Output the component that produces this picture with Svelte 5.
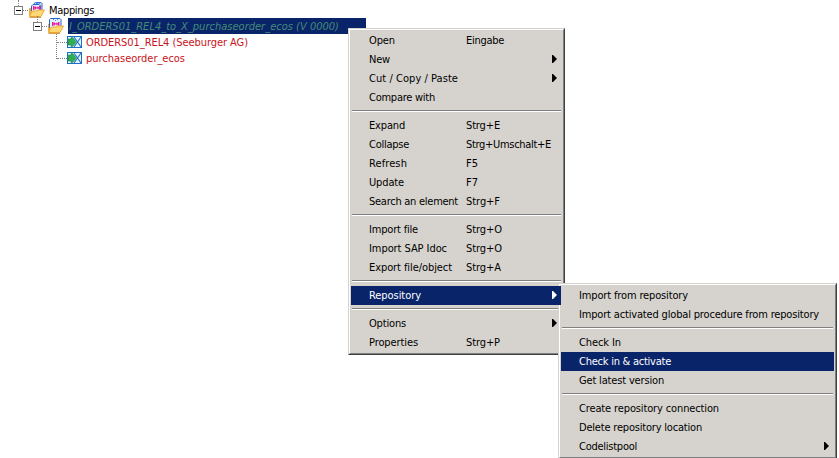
<script>
  const mainMenu = [
    { label: 'Open', w: 26, key: 'Eingabe', kw: 38 },
    { label: 'New', w: 21, sub: true },
    { label: 'Cut / Copy / Paste', w: 89, sub: true },
    { label: 'Compare with', w: 66 },
    null,
    { label: 'Expand', w: 36, key: 'Strg+E', kw: 34 },
    { label: 'Collapse', w: 40, key: 'Strg+Umschalt+E', kw: 85 },
    { label: 'Refresh', w: 38, key: 'F5', kw: 12 },
    { label: 'Update', w: 35, key: 'F7', kw: 12 },
    { label: 'Search an element', w: 89, key: 'Strg+F', kw: 34 },
    null,
    { label: 'Import file', w: 49, key: 'Strg+O', kw: 36 },
    { label: 'Import SAP Idoc', w: 78, key: 'Strg+O', kw: 36 },
    { label: 'Export file/object', w: 83, key: 'Strg+A', kw: 35 },
    null,
    { label: 'Repository', w: 52, sub: true, active: true },
    null,
    { label: 'Options', w: 37, sub: true },
    { label: 'Properties', w: 49, key: 'Strg+P', kw: 34 }
  ];
  const subMenu = [
    { label: 'Import from repository', w: 109 },
    { label: 'Import activated global procedure from repository', w: 240 },
    null,
    { label: 'Check In', w: 42 },
    { label: 'Check in & activate', w: 92, active: true },
    { label: 'Get latest version', w: 85 },
    null,
    { label: 'Create repository connection', w: 140 },
    { label: 'Delete repository location', w: 123 },
    { label: 'Codelistpool', w: 58, sub: true }
  ];

  // Track the text so that it fills the given advance width.
  function fit(node, width) {
    const natural = node.getBoundingClientRect().width;
    node.style.letterSpacing = (width - natural) / node.textContent.length + 'px';
  }
</script>

{#snippet folder(stacked)}
  <svg class="folder" width="17" height="16" viewBox="0 0 17 16">
    <path d="M1 6h3v3l-2 5H1z" fill="#f3a93c" />
    {#if stacked}
      <path d="M6 9V1.500L7.500.5H13l1 1v7" fill="#c3d9f6" stroke="#2f72d2" />
      <path d="M3.500 9V4L5 2.500h6L12.500 4v5" fill="#e6f0fb" stroke="#2566cc" />
      <path d="M8 1.500h2M11 1.500h1" stroke="#5c90dc" />
    {:else}
      <path d="M2.500 10V1.500L3.500.5h9.500l1 1V9" fill="#e3effc" stroke="#2566cc" />
      <path d="M6 1.500h1M8 2.500h1M10 1.500h1" stroke="#5c90dc" />
    {/if}
    <path d="M5 4h1.500v4H5zM11 4h1.500v4H11zM6 5.200h6v1.300H6zM7 4.500h1v2.800H7zM9.500 4.500h1v2.800h-1z" fill="#e8209c" />
    <path d="M1.500 14.500l3-5.500h4.500l1.500-1h6L13 14.500z" fill="#ffd873" stroke="#f0aa3c" />
    <path d="M1.500 15.300H13" stroke="#c98a2a" />
  </svg>
{/snippet}

{#snippet mapIcon()}
  <svg class="map" width="15" height="12" viewBox="0 0 15 12">
    <rect x=".5" y=".5" width="14" height="11" fill="#e2f4fd" stroke="#1d6fc4" />
    <path d="M7 1l7 10M14 1L7 11" fill="none" stroke="#1d6fc4" stroke-width="1.1" />
    <path d="M1 3h3V1.500h1.500L9 5.500v1l-3.500 4H4V9H1z" fill="#2fae55" stroke="#178747" stroke-width=".6" />
  </svg>
{/snippet}

{#snippet menu(items)}
  {#each items as item}
    {#if item}
      <div class="item" class:active={item.active}>
        <span class="label"><span use:fit={item.w}>{item.label}</span></span>
        {#if item.key}<span class="key"><span use:fit={item.kw}>{item.key}</span></span>{/if}
        {#if item.sub}
          <svg class="arrow" width="5" height="8" viewBox="0 0 5 8"><path d="M0 0h1l4 4-4 4H0z" fill="currentColor" /></svg>
        {/if}
      </div>
    {:else}
      <div class="separator"></div>
    {/if}
  {/each}
{/snippet}

<main>
  <div class="tree">
    <div class="node root">
      <i class="stem"></i><b class="toggle"></b><i class="link"></i>{@render folder(true)}
      <span class="caption"><span use:fit={45}>Mappings</span></span>
    </div>
    <div class="node mapping">
      <i class="stem"></i><b class="toggle"></b><i class="link"></i>{@render folder(false)}
      <span class="caption selected"><span use:fit={270}>I_ORDERS01_REL4_to_X_purchaseorder_ecos (V 0000)</span></span>
    </div>
    <div class="leaves">
      <div class="node leaf"><i class="link"></i>{@render mapIcon()}<span class="caption"><span use:fit={162}>ORDERS01_REL4 (Seeburger AG)</span></span></div>
      <div class="node leaf"><i class="link"></i>{@render mapIcon()}<span class="caption"><span use:fit={99}>purchaseorder_ecos</span></span></div>
    </div>
  </div>
  <div class="popup primary">{@render menu(mainMenu)}</div>
  <div class="popup secondary">{@render menu(subMenu)}</div>
</main>

<style>
  :global(body) { margin: 0; background: #fff; }
  main {
    position: relative;
    width: 839px;
    height: 458px;
    overflow: hidden;
    background: #fff;
    color: #000;
    font: 11px/16px "DejaVu Sans Condensed", "DejaVu Sans", sans-serif;
    font-stretch: condensed;
    white-space: nowrap;
  }
  .tree { padding-top: 2px; }
  .node { position: relative; display: flex; align-items: center; height: 16px; }
  .root { padding-left: 14px; }
  .mapping { padding-left: 33px; }
  .leaf { padding-left: 57px; }
  .leaves { position: relative; }
  .leaves::before {
    content: ""; position: absolute; left: 56px; top: 0; height: 25px;
    border-left: 1px dotted #808080;
  }
  .stem { position: absolute; left: 18px; top: -2px; height: 6px; border-left: 1px dotted #808080; }
  .mapping .stem { left: 37px; }
  .toggle {
    position: relative; box-sizing: border-box; width: 9px; height: 9px;
    border: 1px solid #808080; background: #fff;
  }
  .toggle::after { content: ""; position: absolute; left: 1px; top: 3px; width: 5px; height: 1px; background: #000; }
  .link { width: 5px; border-top: 1px dotted #808080; }
  .leaf .link { width: 10px; }
  svg { display: block; flex: none; }
  .caption { display: block; height: 16px; margin-left: 3px; padding-left: 1px; line-height: 18px; }
  .caption span, .label span, .key span { display: inline-block; }
  .selected {
    width: 297px; background: #0a246a; color: #438b76; font-style: italic;
    margin-left: 4px;
  }
  .leaf .caption { color: #c8141c; margin-left: 3px; }
  .popup {
    position: absolute; box-sizing: border-box; padding: 2px; background: #d6d3ce;
    border: 1px solid; border-color: #d6d3ce #404040 #404040 #d6d3ce;
  }
  .popup::before {
    content: ""; position: absolute; inset: 0; border: 1px solid;
    border-color: #fff #808080 #808080 #fff;
  }
  .primary { left: 348px; top: 28px; width: 217px; height: 327px; }
  .secondary { left: 558px; top: 283px; width: 279px; height: 176px; }
  .item {
    position: relative; display: flex; align-items: center; box-sizing: border-box;
    height: 19px; padding: 1px 0 0 18px; line-height: 18px;
  }
  .label, .key { height: 18px; }
  .label { width: 97px; }
  .secondary .label { width: 244px; }
  .active { z-index: 2; background: #0a246a; color: #fff; }
  .primary .active { width: 210px; }
  .arrow { position: absolute; right: 5px; top: 5px; }
  .primary .active .arrow { right: 4px; }
  .separator { height: 9px; padding: 3px 1px 0; box-sizing: border-box; }
  .separator::after { content: ""; display: block; height: 1px; background: #808080; border-bottom: 1px solid #fff; }
</style>
